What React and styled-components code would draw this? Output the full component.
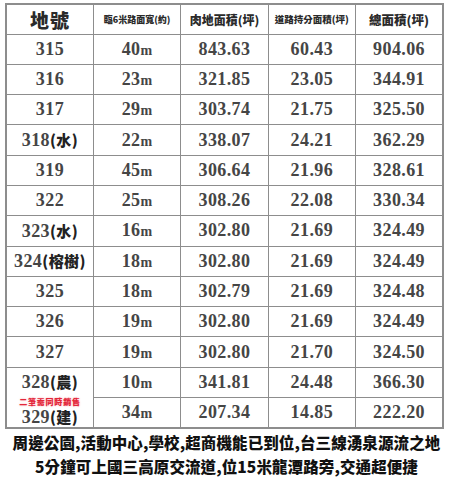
import styled, { createGlobalStyle } from "styled-components";

const GlobalStyle = createGlobalStyle`
  body {
    margin: 0;
    background: #fff;
  }
`;

const rows = [
  { lot: "315", road: "40", land: "843.63", share: "60.43", total: "904.06" },
  { lot: "316", road: "23", land: "321.85", share: "23.05", total: "344.91" },
  { lot: "317", road: "29", land: "303.74", share: "21.75", total: "325.50" },
  { lot: "318", tag: "水", road: "22", land: "338.07", share: "24.21", total: "362.29" },
  { lot: "319", road: "45", land: "306.64", share: "21.96", total: "328.61" },
  { lot: "322", road: "25", land: "308.26", share: "22.08", total: "330.34" },
  { lot: "323", tag: "水", road: "16", land: "302.80", share: "21.69", total: "324.49" },
  { lot: "324", tag: "榕樹", road: "18", land: "302.80", share: "21.69", total: "324.49" },
  { lot: "325", road: "18", land: "302.79", share: "21.69", total: "324.48" },
  { lot: "326", road: "19", land: "302.80", share: "21.69", total: "324.49" },
  { lot: "327", road: "19", land: "302.80", share: "21.70", total: "324.50" },
];

const Page = styled.div`
  width: 453px;
  height: 480px;
  overflow: hidden;
  padding-top: 3px;
  box-sizing: border-box;
`;

const Table = styled.table`
  margin-left: 5px;
  width: 439px;
  table-layout: fixed;
  border-collapse: collapse;
  border: 2px solid #8d8d8d;
`;

const HeadCell = styled.th`
  height: 28.5px;
  padding: 0;
  border: 1.5px solid #8d8d8d;
  font-family: "Noto Sans CJK TC", sans-serif;
  font-weight: 900;
  font-size: ${(p) => p.$size || 12}px;
  letter-spacing: ${(p) => p.$spacing || 0}px;
  color: #2a2a2a;
  white-space: nowrap;
  overflow: hidden;
`;

const Cell = styled.td`
  height: 29.3px;
  padding: 0;
  border: 1.5px solid #8d8d8d;
  border-top-color: ${(p) => (p.$pink ? "#d7a2ab" : "#8d8d8d")};
  border-bottom-color: ${(p) => (p.$pinkBottom ? "#d7a2ab" : "#8d8d8d")};
  text-align: center;
  font-family: "Liberation Serif", serif;
  font-weight: 700;
  font-size: 18px;
  color: #454545;
  letter-spacing: 0.4px;
  white-space: nowrap;
`;

const Unit = styled.span`
  font-size: 14px;
`;

const Tag = styled.span`
  font-family: "Noto Sans CJK TC", sans-serif;
  font-weight: 900;
  font-size: 15px;
  color: #222;
`;

const Merged = styled.div`
  display: flex;
  flex-direction: column;
  align-items: center;
`;

const LotLine = styled.div`
  height: ${(p) => p.$h}px;
  line-height: ${(p) => p.$h}px;
`;

const Note = styled.div`
  margin: 2px 0 1px;
  height: 8px;
  line-height: 8px;
  font-family: "Noto Sans CJK TC", sans-serif;
  font-weight: 900;
  font-size: 8px;
  color: #e3263a;
  text-shadow: 0 0 2px #f7a0a8;
  letter-spacing: 0.8px;
`;

const Footer = styled.div`
  margin-top: 1px;
  font-family: "Noto Sans CJK TC", sans-serif;
  font-weight: 900;
  font-size: 15.5px;
  line-height: 24px;
  color: #111;
  text-align: center;
  white-space: nowrap;
  letter-spacing: 0.1px;
`;

function Lot({ lot, tag }) {
  return (
    <>
      {lot}
      {tag && <Tag>({tag})</Tag>}
    </>
  );
}

export default function App() {
  return (
    <Page>
      <GlobalStyle />
      <Table>
        <thead>
          <tr>
            <HeadCell $size={19} $spacing={1}>地號</HeadCell>
            <HeadCell $size={9}>臨6米路面寬(約)</HeadCell>
            <HeadCell $size={12}>肉地面積(坪)</HeadCell>
            <HeadCell $size={9.5}>道路持分面積(坪)</HeadCell>
            <HeadCell $size={12.5}>總面積(坪)</HeadCell>
          </tr>
        </thead>
        <tbody>
          {rows.map((r) => (
            <tr key={r.lot}>
              <Cell>
                <Lot lot={r.lot} tag={r.tag} />
              </Cell>
              <Cell>
                {r.road}
                <Unit>m</Unit>
              </Cell>
              <Cell>{r.land}</Cell>
              <Cell>{r.share}</Cell>
              <Cell>{r.total}</Cell>
            </tr>
          ))}
          <tr>
            <Cell rowSpan={2} $pink $pinkBottom>
              <Merged>
                <LotLine $h={28}>
                  <Lot lot="328" tag="農" />
                </LotLine>
                <Note>二筆需同時銷售</Note>
                <LotLine $h={20}>
                  <Lot lot="329" tag="建" />
                </LotLine>
              </Merged>
            </Cell>
            <Cell $pink>
              10<Unit>m</Unit>
            </Cell>
            <Cell $pink>341.81</Cell>
            <Cell $pink>24.48</Cell>
            <Cell $pink>366.30</Cell>
          </tr>
          <tr>
            <Cell $pinkBottom>
              34<Unit>m</Unit>
            </Cell>
            <Cell $pinkBottom>207.34</Cell>
            <Cell $pinkBottom>14.85</Cell>
            <Cell $pinkBottom>222.20</Cell>
          </tr>
        </tbody>
      </Table>
      <Footer>
        周邊公園,活動中心,學校,超商機能已到位,台三線湧泉源流之地
        <br />
        5分鐘可上國三高原交流道,位15米龍潭路旁,交通超便捷
      </Footer>
    </Page>
  );
}
